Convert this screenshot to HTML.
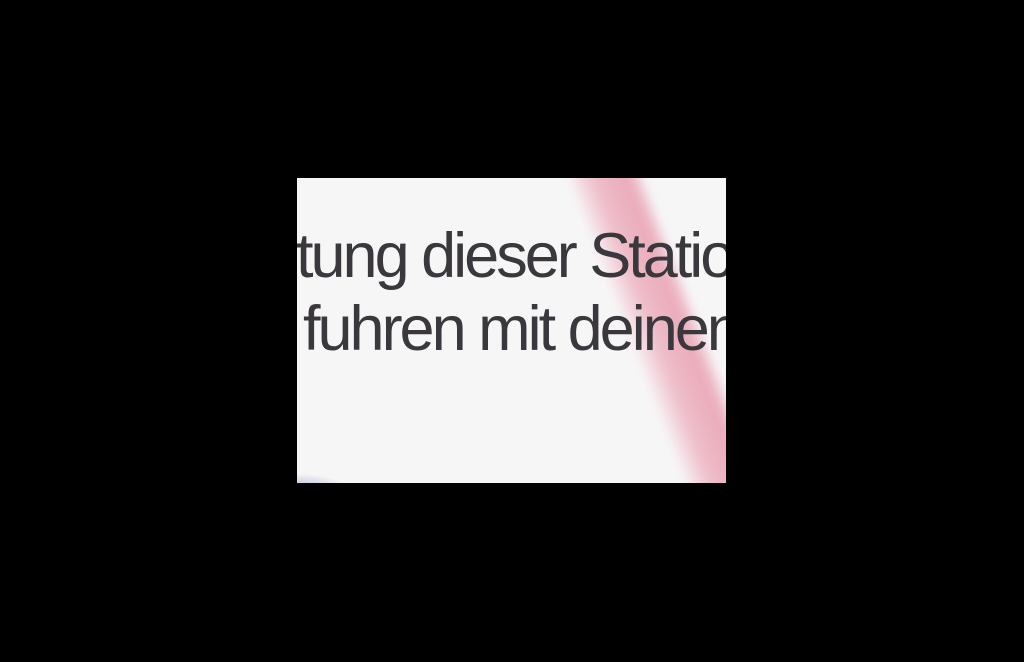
<!DOCTYPE html>
<html><head><meta charset="utf-8"><style>
html,body{margin:0;padding:0;background:#000;width:1024px;height:662px;overflow:hidden}
#box{position:absolute;left:297px;top:178px;width:429px;height:305px;overflow:hidden;background:#f7f6f7}
#stripe{position:absolute;left:250px;top:-60px;width:72px;height:460px;background:linear-gradient(90deg,rgba(235,150,170,0.1),rgba(232,150,170,0.6) 35%,rgba(230,145,165,0.75) 80%,rgba(235,160,180,0.3));transform:skewX(21deg);transform-origin:top left;filter:blur(5px)}
#blue{position:absolute;left:-60px;bottom:-40px;width:120px;height:50px;border-radius:50%;background:radial-gradient(ellipse at center,#8f9bc6,rgba(160,170,210,0) 70%)}
.t{position:absolute;font-family:"Liberation Sans",sans-serif;font-size:63px;color:#3a383c;white-space:nowrap;letter-spacing:-3px}
</style></head><body>
<div id="box">
<div id="stripe"></div>
<div id="blue"></div>
<div class="t" style="left:-12px;top:42px">itung dieser Station</div>
<div class="t" style="left:6px;top:115px">fuhren mit deinen</div>
</div>
</body></html>
